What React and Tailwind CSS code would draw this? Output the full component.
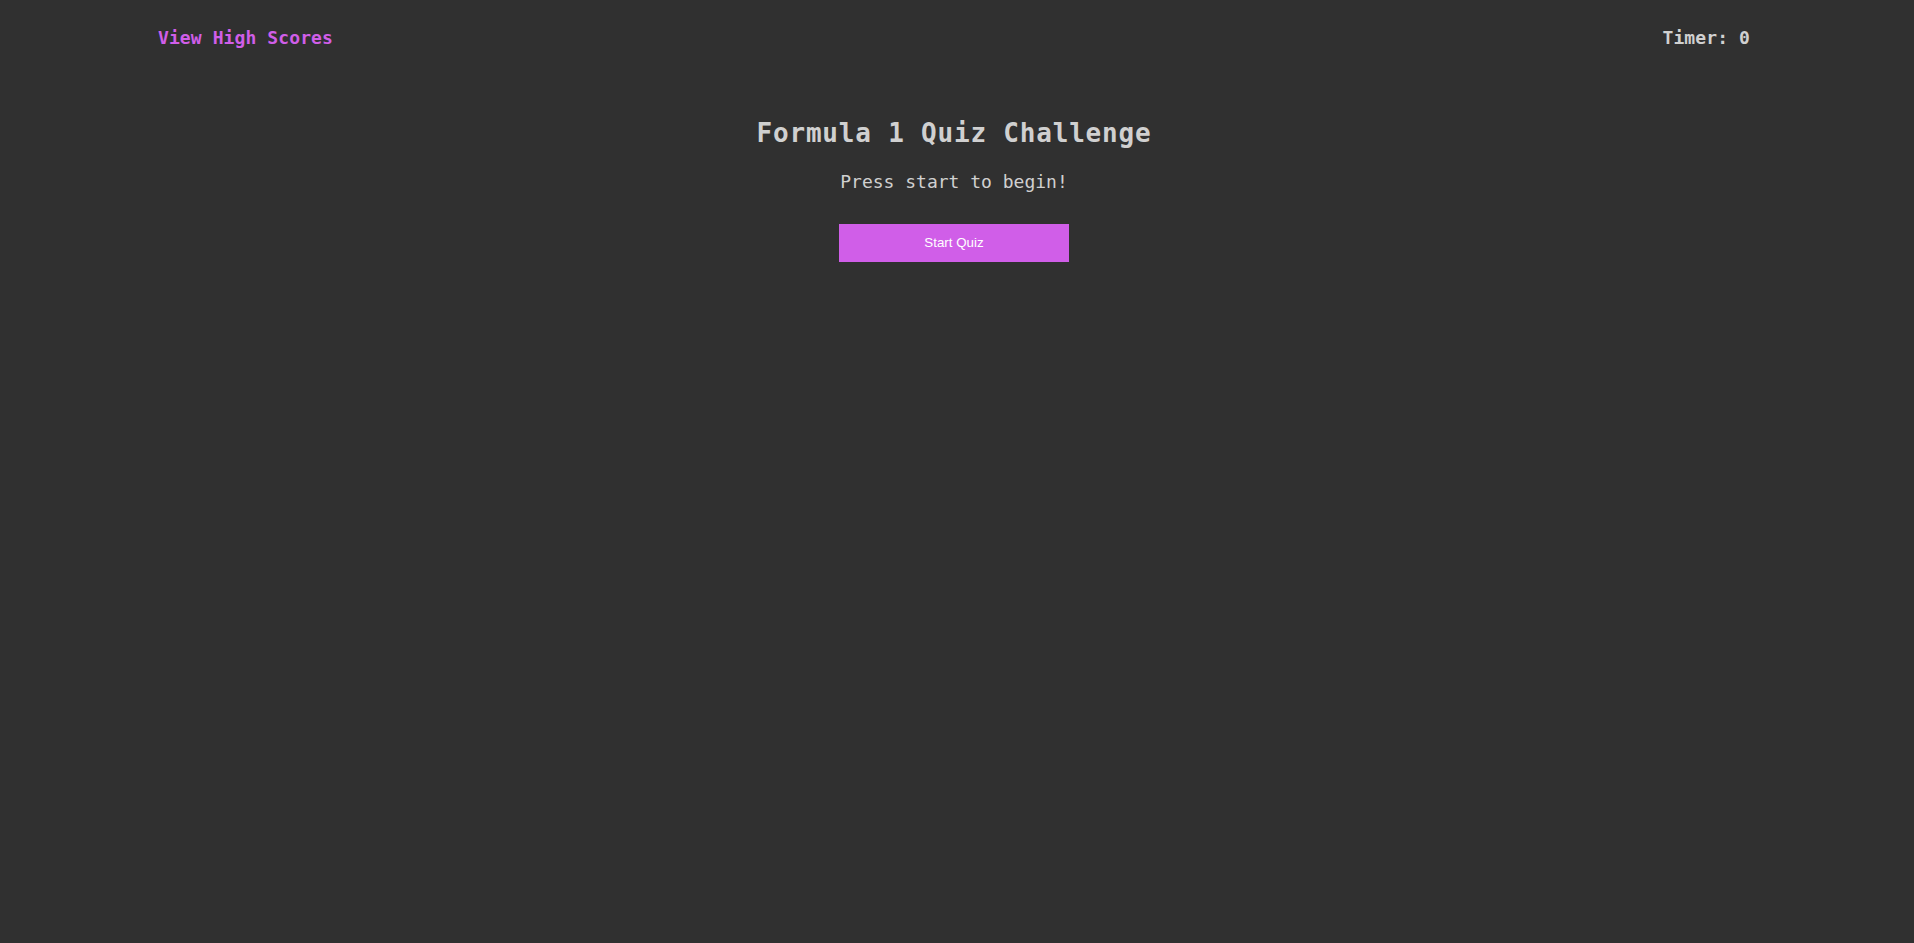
export default function App() {
  return (
    <div className="min-h-[943px] w-full bg-[#303030] font-['DejaVu_Sans_Mono',monospace]">
      <div className="w-[1908px]">
        <header className="flex items-center justify-between px-[158px] pt-[27px]">
          <a className="text-[18px] leading-[22px] font-bold tracking-[0.1px] text-[#d05ee8] cursor-pointer">View High Scores</a>
          <div className="text-[18px] leading-[22px] font-bold tracking-[0.1px] text-[#d0d0d0]">Timer: 0</div>
        </header>
        <main className="flex flex-col items-center pt-[68px]">
          <h1 className="text-[26px] leading-[32px] font-bold tracking-[0.8px] text-[#d0d0d0]">Formula 1 Quiz Challenge</h1>
          <p className="mt-[22px] text-[18px] leading-[22px] text-[#d0d0d0]">Press start to begin!</p>
          <button className="mt-[31px] flex h-[38px] w-[230px] items-center justify-center bg-[#d05ee8] font-['Liberation_Sans',Arial,sans-serif] text-[13.33px] text-white">
            Start Quiz
          </button>
        </main>
      </div>
    </div>
  );
}
